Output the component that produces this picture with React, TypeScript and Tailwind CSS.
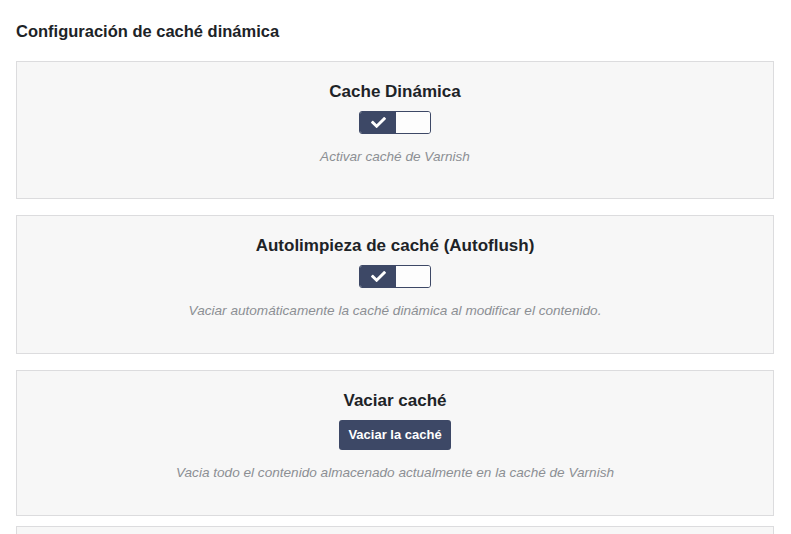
import React from 'react';
import { FaCheck } from 'react-icons/fa';

const Toggle = () => (
  <div className="mx-auto flex h-[23px] w-[72px] overflow-hidden rounded-[3px] border border-[#3d4866]">
    <div className="flex w-[36px] items-center justify-center bg-[#3d4866]">
      <FaCheck className="h-[15px] w-[15px] text-white" />
    </div>
    <div className="flex-1 bg-[#fdfdfd]" />
  </div>
);

const Card = ({
  title,
  desc,
  children,
  className = 'mb-4',
}: {
  title?: string;
  desc?: string;
  children?: React.ReactNode;
  className?: string;
}) => (
  <div className={`border border-[#dcdcde] bg-[#f7f7f7] px-4 pt-[19px] text-center ${className}`}>
    {title && (
      <>
        <h3 className="text-[17px] leading-[21px] font-semibold text-[#1d2327]">{title}</h3>
        <div className="mt-[9px]">{children}</div>
        <p className="mt-[14px] text-[13.6px] leading-[18px] text-[#8c8f94] italic">{desc}</p>
      </>
    )}
  </div>
);

const App = () => {
  return (
    <div
      className="min-h-screen bg-white pl-4 pr-[17px] pt-[21px]"
      style={{ fontFamily: '"Liberation Sans", Arial, sans-serif' }}
    >
      {/* Header */}
      <h2 className="mb-[20px] text-[16.5px] leading-[20px] font-semibold text-[#1d2327]">
        Configuración de caché dinámica
      </h2>

      <Card title="Cache Dinámica" desc="Activar caché de Varnish" className="mb-4 h-[138px]">
        <Toggle />
      </Card>

      <Card
        title="Autolimpieza de caché (Autoflush)"
        desc="Vaciar automáticamente la caché dinámica al modificar el contenido."
        className="mb-4 h-[139px]"
      >
        <Toggle />
      </Card>

      <Card
        title="Vaciar caché"
        desc="Vacia todo el contenido almacenado actualmente en la caché de Varnish"
        className="mb-[10px] h-[146px]"
      >
        <button className="h-[30px] w-[112px] rounded-[3px] bg-[#3d4866] text-[13px] font-semibold text-white">
          Vaciar la caché
        </button>
      </Card>

      <Card className="h-[139px]" />
    </div>
  );
};

export default App;
